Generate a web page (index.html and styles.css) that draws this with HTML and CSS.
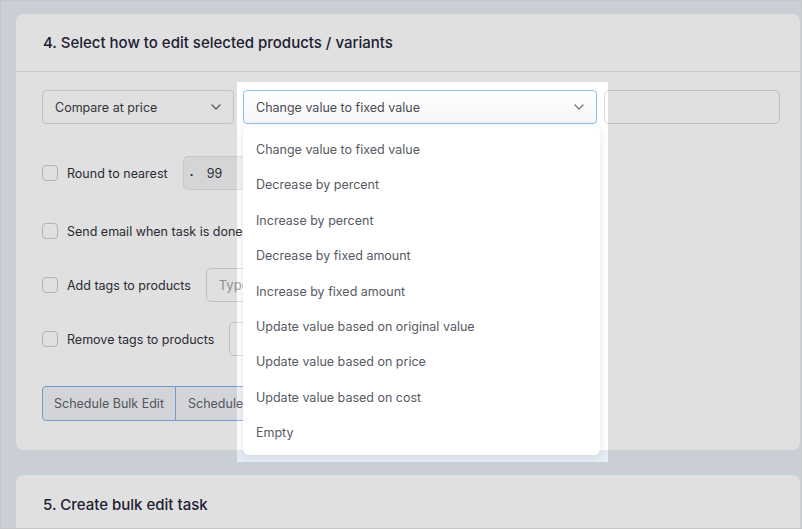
FILE: index.html
```html
<!DOCTYPE html>
<html lang="en">
<head>
    <meta charset="UTF-8">
    <meta name="viewport" content="width=device-width, initial-scale=1.0">
    <title>Bulk Edit</title>
    <link rel="stylesheet" href="styles.css">
</head>
<body>
    <div class="frame">
        <div class="page">
            <div class="card">
                <div class="card-head">
                    <h2>4. Select how to edit selected products / variants</h2>
                </div>
                <div class="card-body">
                    <div class="edit-row">
                        <div class="select field-type">
                            <span>Compare at price</span>
                            <svg class="chev" viewBox="0 0 10 6" width="10" height="6"><path d="M1 1l4 4 4-4" fill="none" stroke="#666" stroke-width="1.3" stroke-linecap="round" stroke-linejoin="round"/></svg>
                        </div>
                        <div class="select-wrap">
                            <div class="select focused">
                                <span>Change value to fixed value</span>
                                <svg class="chev" viewBox="0 0 10 6" width="10" height="6"><path d="M1 1l4 4 4-4" fill="none" stroke="#777" stroke-width="1.3" stroke-linecap="round" stroke-linejoin="round"/></svg>
                            </div>
                            <ul class="menu">
                                <li>Change value to fixed value</li>
                                <li>Decrease by percent</li>
                                <li>Increase by percent</li>
                                <li>Decrease by fixed amount</li>
                                <li>Increase by fixed amount</li>
                                <li>Update value based on original value</li>
                                <li>Update value based on price</li>
                                <li>Update value based on cost</li>
                                <li>Empty</li>
                            </ul>
                        </div>
                        <div class="input value-input"></div>
                    </div>

                    <div class="options">
                        <div class="opt">
                            <span class="check"></span>
                            <label>Round to nearest</label>
                            <div class="input round-input"><span class="dot">.</span><span>99</span></div>
                        </div>
                        <div class="opt opt-email">
                            <span class="check"></span>
                            <label>Send email when task is done</label>
                        </div>
                        <div class="opt opt-add">
                            <span class="check"></span>
                            <label>Add tags to products</label>
                            <div class="input tag-input"><span class="ph">Type</span></div>
                        </div>
                        <div class="opt">
                            <span class="check"></span>
                            <label>Remove tags to products</label>
                            <div class="input tag-input"></div>
                        </div>
                    </div>

                    <div class="btn-group">
                        <button class="btn btn-now">Schedule Bulk Edit</button>
                        <button class="btn btn-later">Schedule</button>
                    </div>
                </div>
            </div>

            <div class="card">
                <div class="card-head last">
                    <h2>5. Create bulk edit task</h2>
                </div>
            </div>
        </div>

        <!-- tour spotlight -->
        <div class="spotlight"></div>
    </div>
</body>
</html>
```

FILE: styles.css
```css
* {
    box-sizing: border-box;
}
body {
    margin: 0;
    font-family: Inter, "Open Sans", sans-serif;
    color: #333;
}
.frame {
    position: relative;
    width: 802px;
    height: 529px;
    border: 1px solid #c6c6c6;
    background: #e6ecf4;
    overflow: hidden;
}
.page {
    padding: 13px 0 0 15px;
}
.card {
    width: 784px;
    background: #fff;
    border-radius: 8px;
    margin-bottom: 25px;
}
.card-head {
    height: 58px;
    padding: 0 27px;
    display: flex;
    align-items: center;
    border-bottom: 1px solid #e4e6ec;
}
.card-head.last {
    border-bottom: none;
}
h2 {
    margin: 0;
    font-size: 15px;
    font-weight: 500;
    color: #24253a;
}
.card-body {
    padding: 18px 20px 29px 26px;
}
.edit-row {
    display: flex;
    align-items: flex-start;
}
.select {
    height: 34px;
    border: 1px solid #dcdde3;
    border-radius: 4px;
    background: #fff;
    display: flex;
    align-items: center;
    justify-content: space-between;
    padding: 0 12px;
    font-size: 12.5px;
    color: #3a3b45;
}
.field-type {
    width: 192px;
    flex: none;
}
.select-wrap {
    position: relative;
    width: 354px;
    flex: none;
    margin-left: 9px;
}
.select.focused {
    border-color: #8fbef2;
    background: linear-gradient(#fff, #f6f6f8);
    color: #4a4b55;
}
.menu {
    position: absolute;
    top: calc(100% + 2px);
    left: 0;
    width: 357px;
    margin: 0;
    padding: 6px 0 4px;
    list-style: none;
    background: #fff;
    border-radius: 6px;
    box-shadow: 0 2px 8px rgba(40, 50, 80, 0.12);
    z-index: 5;
}
.menu li {
    height: 35.4px;
    line-height: 35.4px;
    padding-left: 13px;
    font-size: 12.5px;
    color: #575a64;
}
.input {
    height: 34px;
    border: 1px solid #d8dae4;
    border-radius: 5px;
    background: #fff;
}
.value-input {
    width: 176px;
    flex: none;
    margin-left: 7px;
}
.options {
    padding-top: 32px;
}
.opt {
    display: flex;
    align-items: center;
    height: 34px;
    font-size: 12.5px;
}
.opt + .opt {
    margin-top: 20px;
}
.opt-email {
    margin-top: 24px !important;
}
.opt-add {
    margin-top: 20px !important;
}
.check {
    width: 16px;
    height: 16px;
    border: 1px solid #c9cbd4;
    border-radius: 4px;
    background: #fff;
    margin-right: 9px;
}
.opt label {
    color: #30313c;
}
.round-input {
    width: 120px;
    margin-left: 15px;
    background: #f3f3f5;
    border-color: #e2e3e8;
    display: flex;
    align-items: center;
    padding-left: 6px;
    color: #333;
}
.round-input .dot {
    font-weight: 700;
    margin-right: 13px;
    position: relative;
    top: -2px;
}
.tag-input {
    width: 120px;
    margin-left: 15px;
    display: flex;
    align-items: center;
    padding-left: 12px;
    color: #a4a6b0;
    font-size: 13px;
}
.btn-group {
    display: flex;
    margin-top: 30px;
}
.btn {
    height: 35px;
    padding: 0;
    font-family: inherit;
    font-size: 12.5px;
    color: #60626c;
    background: #f1f2f6;
    border: 1px solid #7fb1ee;
    border-radius: 4px 0 0 4px;
}
.btn-now {
    width: 134px;
}
.btn + .btn {
    border-left: none;
    border-radius: 0 4px 4px 0;
    padding: 0 12px;
    text-align: left;
}
.btn-later {
    width: 120px;
}
.spotlight {
    position: absolute;
    left: 236px;
    top: 81px;
    width: 371px;
    height: 380px;
    box-shadow: 0 0 0 1200px rgba(0, 0, 0, 0.12);
    pointer-events: none;
    z-index: 10;
}
```
